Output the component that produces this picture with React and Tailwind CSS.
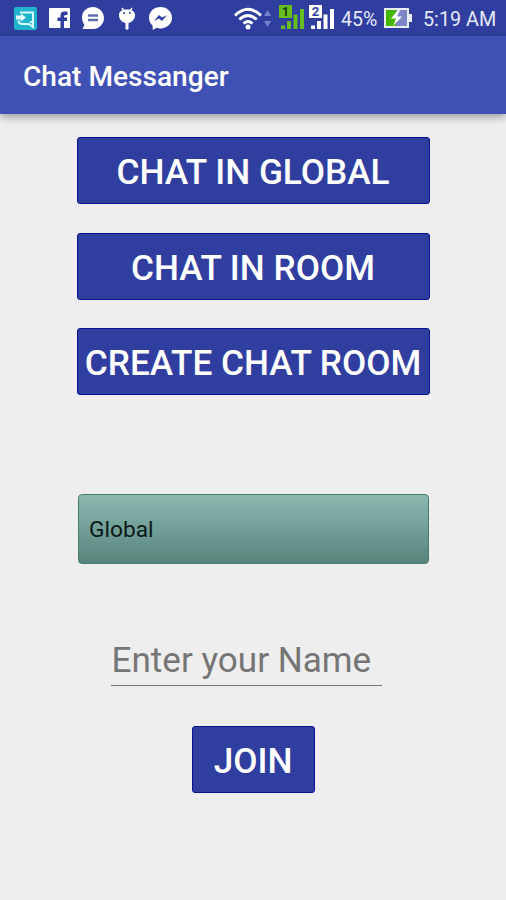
import { useState } from 'react';

const menuItems = ['Chat in Global', 'Chat in Room', 'Create Chat Room'];

export default function App() {
  const [name, setName] = useState('');

  return (
    <div className="flex flex-col h-[900px] w-[506px] overflow-hidden bg-[#eeeeee] font-[Roboto,sans-serif]">
      <StatusBar />

      {/* App bar */}
      <header className="z-10 flex h-[78px] shrink-0 items-center bg-[#3f51b5] pt-[3px] pl-[23px] shadow-[0_3px_8px_rgba(0,0,0,0.35)]">
        <h1 className="text-[28.1px] leading-8 font-medium text-white whitespace-nowrap">Chat Messanger</h1>
      </header>

      <main className="flex flex-col items-center pt-[23px]">
        <div className="flex flex-col gap-[28.5px]">
          {menuItems.map(label => (
            <MenuButton key={label} label={label} className="w-[353px]" />
          ))}
        </div>

        {/* Room picker */}
        <button className="mt-[99px] ml-px flex h-[70px] w-[351px] items-center rounded-[4px] border border-[#477d6e] bg-linear-to-b from-[#8bb9b0] via-[#719f98] to-[#57837a] pt-[3px] pl-[10px] text-[22.7px] text-[#0c1918]">
          Global
        </button>

        <input
          type="text"
          value={name}
          placeholder="Enter your Name"
          onChange={(e) => setName(e.target.value)}
          className="mt-[71px] mr-[14px] h-[51px] w-[271px] border-b border-[#777777] pt-px pl-px text-[35.1px] text-[#333333] outline-none placeholder:text-[#757575]"
        />

        <MenuButton label="Join" className="mt-10 w-[123px]" />
      </main>
    </div>
  );
}

function MenuButton({ label, className }) {
  return (
    <button
      className={`flex h-[67px] items-center justify-center rounded-[3px] border border-[#09128f] bg-[#303f9f] pt-[5px] text-[35.2px] leading-none font-medium text-white uppercase whitespace-nowrap ${className}`}
    >
      {label}
    </button>
  );
}

function StatusBar() {
  return (
    <div className="flex h-9 shrink-0 items-center bg-[#303f9f] pl-[14px] text-[19.8px] text-[#e6e9f8]">
      {/* Notifications */}
      <svg className="h-[23px] w-[23px] shrink-0" viewBox="0 0 23 23" fill="none">
        <rect width="23" height="23" rx="2" fill="#20b3cb" />
        <path d="M6 5.500h13V15h-3" stroke="#d5fbff" strokeWidth="2" />
        <path d="M2 8.500h5V6.500l5 4-5 4v-2H2z" fill="#e5ffff" />
        <path d="M4.500 13.500q0 3.500 4 3.500H15l4 3v-5" stroke="#d5fbff" strokeWidth="2" />
      </svg>
      <svg className="ml-3 h-5 w-[21px] shrink-0" viewBox="0 0 21 20">
        <rect width="21" height="20" rx="1" fill="#fff" />
        <path d="M11.500 20v-7H8.500V9.500h3V7.500q0-4 4-4h3V7h-2q-1.500 0-1.500 1.500v1h3L18 13h-3v7z" fill="#303f9f" />
      </svg>
      <svg className="ml-[11px] h-[22px] w-[23px] shrink-0" viewBox="0 0 23 22">
        <path d="M12 0C5.800 0 1 4.500 1 10.500c0 3 1 5.300 2.500 7.200L1.500 22H12c6.100 0 11-5 11-11S18.100 0 12 0z" fill="#fff" />
        <path d="M7 8.500h10M7 13h10" stroke="#626ca9" strokeWidth="2.500" />
      </svg>
      <svg className="ml-[15px] h-[23px] w-4 shrink-0" viewBox="0 0 16 23">
        <path d="m3 1 2 3m8-3-2 3" stroke="#fff" strokeWidth="1.500" />
        <path d="M0 8c0-4 3.500-5.500 8-5.500S16 4 16 8c0 4-2.500 7-6.500 8v6q-1.500 1.500-3 0v-6C2.500 15 0 12 0 8z" fill="#fff" />
        <circle cx="5" cy="6" r="1" fill="#303f9f" />
        <circle cx="11" cy="6" r="1" fill="#303f9f" />
      </svg>
      <svg className="ml-[14px] h-[23px] w-[23px] shrink-0" viewBox="0 0 23 23">
        <path d="M11.500 0C5 0 0 4.700 0 10.800c0 3.300 1.400 6 3.700 8V23l4-2.200c1.200.4 2.500.6 3.800.6 6.500 0 11.500-4.700 11.500-10.600S18 0 11.500 0z" fill="#fff" />
        <path d="m5 14 5-6 3 2.500L18 8l-5 6-3-2.500z" fill="#303f9f" />
      </svg>

      {/* Connection */}
      <svg className="ml-[62px] h-[23px] w-7 shrink-0" viewBox="0 0 28 23" fill="none" stroke="#fff" strokeWidth="2.800">
        <path d="M1 8.500q13-12.500 26 0M5.300 12.500q8.700-8 17.400 0M9.500 16.500q4.500-4 9 0" />
        <circle cx="14" cy="20" r="2.500" fill="#fff" stroke="none" />
      </svg>
      <svg className="ml-0.5 h-[17px] w-[7px] shrink-0" viewBox="0 0 7 17" fill="#7681c9">
        <path d="M3.500 0 7 6H0zM0 11h7l-3.500 6z" />
      </svg>
      <SignalIcon sim="1" className="ml-2 text-[#65bd20]" badge="#65bd20" digit="#17400c" />
      <SignalIcon sim="2" className="ml-1 text-white" badge="#ffffff" digit="#303f9f" />

      <span className="ml-[6px] w-[37px] shrink-0 pt-[3px] text-[19.500px] leading-6">45%</span>
      <svg className="ml-[6px] h-5 w-7 shrink-0" viewBox="0 0 28 20">
        <path d="M0 0h25v6h3v8h-3v6H0z" fill="#e9eef5" />
        <path d="M2 2h21v16H2z" fill="#7e88c7" />
        <path d="M2 2h10v16H2z" fill="#45b600" />
        <path d="m14 2-7 8.500h5L9 18l9-9.500h-5L16 2z" fill="#fff" />
      </svg>
      <span className="ml-[11px] shrink-0 pt-[3px] leading-6 whitespace-nowrap">5:19 AM</span>
    </div>
  );
}

function SignalIcon({ sim, badge, digit, className }) {
  return (
    <svg className={`mb-[2px] h-[25px] w-[26px] shrink-0 ${className}`} viewBox="0 0 26 25" fill="currentColor">
      <rect width="13" height="13" fill={badge} />
      <text x="6.500" y="11" textAnchor="middle" fontSize="13" fontWeight="700" fill={digit}>{sim}</text>
      <path d="M2 20.500h4V24H2zM8 16h4v8H8zM14.500 9.500h4V24h-4zM21 4h4v20h-4z" />
    </svg>
  );
}
